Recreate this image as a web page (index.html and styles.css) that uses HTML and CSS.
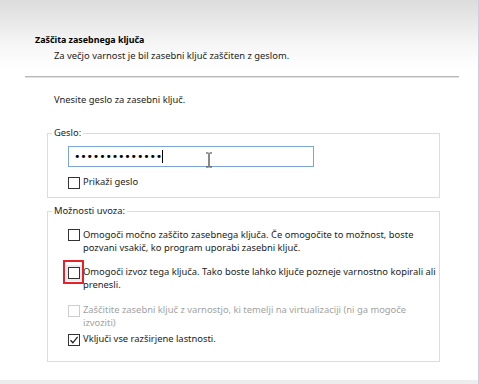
FILE: index.html
```html
<!DOCTYPE html>
<html lang="sl">
<head>
    <meta charset="UTF-8">
    <meta name="viewport" content="width=device-width, initial-scale=1.0">
    <title>Zaščita zasebnega ključa</title>
    <link rel="stylesheet" href="styles.css">
</head>
<body>
    <div class="window">
        <!-- Glava čarovnika -->
        <div class="header">
            <h1 class="title">Zaščita zasebnega ključa</h1>
            <p class="subtitle">Za večjo varnost je bil zasebni ključ zaščiten z geslom.</p>
        </div>
        <div class="separator"></div>

        <div class="content">
            <p class="intro">Vnesite geslo za zasebni ključ.</p>

            <!-- Geslo -->
            <fieldset class="group">
                <legend>Geslo:</legend>
                <div class="group-body group-password">
                    <div class="password-field">
                        <span class="dots">••••••••••••••</span><span class="caret"></span>
                        <svg class="ibeam" width="8" height="16" viewBox="0 0 8 16">
                            <path d="M1 1h2.5M4.5 1H7M4 1.5v13M1 15h2.5M4.5 15H7" stroke="#3a3a3a" stroke-width="1.2" fill="none"/>
                            <circle cx="4" cy="15.3" r="0.9" fill="#e0a060"/>
                        </svg>
                    </div>
                    <div class="check row-show">
                        <span class="box"></span>
                        <span class="check-text">Prikaži geslo</span>
                    </div>
                </div>
            </fieldset>

            <!-- Možnosti uvoza -->
            <fieldset class="group group-second">
                <legend>Možnosti uvoza:</legend>
                <div class="group-body group-options">
                    <div class="check row-1">
                        <span class="box"></span>
                        <span class="check-text">Omogoči močno zaščito zasebnega ključa. Če omogočite to možnost, boste pozvani vsakič, ko program uporabi zasebni ključ.</span>
                    </div>
                    <div class="check row-2">
                        <span class="box marked"></span>
                        <span class="check-text">Omogoči izvoz tega ključa. Tako boste lahko ključe pozneje varnostno kopirali ali prenesli.</span>
                    </div>
                    <div class="check row-3 disabled">
                        <span class="box"></span>
                        <span class="check-text">Zaščitite zasebni ključ z varnostjo, ki temelji na virtualizaciji (ni ga mogoče izvoziti)</span>
                    </div>
                    <div class="check row-4">
                        <span class="box checked">
                            <svg width="10" height="10" viewBox="0 0 10 10">
                                <path d="M1.5 5.2l2.4 2.6L8.6 1.8" stroke="#222" stroke-width="1.3" fill="none"/>
                            </svg>
                        </span>
                        <span class="check-text">Vključi vse razširjene lastnosti.</span>
                    </div>
                </div>
            </fieldset>
        </div>

        <div class="footer"></div>
    </div>
</body>
</html>
```

FILE: styles.css
```css
/* Barve in osnovne nastavitve */
:root {
    --text-color: #1c1c1c;
    --group-border: #dcdcdc;
    --input-border: #7aa7d8;
    --disabled-color: #a2a2a2;
}

body {
    margin: 0;
    padding: 0;
    background: #ffffff;
    font-family: "Noto Sans", "DejaVu Sans", sans-serif;
    font-size: 9.4px;
    color: var(--text-color);
}

.window {
    width: 478px;
    height: 384px;
    border-right: 1px solid #b4d9ef;
    display: flex;
    flex-direction: column;
    overflow: hidden;
}

/* Glava */
.header {
    height: 76px;
    background: linear-gradient(#dcdcdc, #f6f6f6 45px, #ffffff 70px);
    padding-top: 34px;
    box-sizing: border-box;
}

.title {
    margin: 0 0 0 35px;
    font-size: 8.9px;
    font-weight: bold;
    line-height: 12px;
    color: #000;
}

.subtitle {
    margin: 4px 0 0 54px;
    line-height: 12px;
}

.separator {
    height: 1px;
    margin: 0 19px 0 25px;
    background: #b8b8b8;
    border-bottom: 1px solid #e2e2e2;
}

/* Vsebina */
.content {
    flex: 1;
    padding-left: 47px;
}

.intro {
    margin: 16px 0 0 7px;
    line-height: 12px;
}

.group {
    width: 393px;
    box-sizing: border-box;
    margin: 21px 0 0 0;
    padding: 0;
    border: 1px solid var(--group-border);
    min-width: 0;
}

.group legend {
    margin-left: 4px;
    padding: 0 2px;
    line-height: 12px;
}

.group-second {
    margin-top: 7px;
}

.group-body {
    padding: 0 1px 0 20px;
}

.group-password {
    padding-top: 7px;
    padding-bottom: 8px;
}

.group-options {
    padding-top: 12px;
    padding-bottom: 15px;
}

/* Polje za geslo */
.password-field {
    position: relative;
    width: 246px;
    height: 21px;
    box-sizing: border-box;
    border: 1px solid var(--input-border);
    display: flex;
    align-items: center;
    padding-left: 5px;
}

.dots {
    font-family: "DejaVu Sans", sans-serif;
    font-size: 11px;
    letter-spacing: -0.2px;
    color: #000;
    line-height: 12px;
}

.caret {
    width: 1px;
    height: 13px;
    background: #000;
    margin-left: 0;
}

.ibeam {
    position: absolute;
    left: 136px;
    top: 5px;
}

/* Potrditvena polja */
.check {
    display: flex;
    align-items: flex-start;
    line-height: 12.5px;
}

.box {
    position: relative;
    flex: none;
    width: 12px;
    height: 12px;
    box-sizing: border-box;
    border: 1px solid #333;
    background: #fff;
    margin-top: 1px;
    margin-right: 3px;
    display: flex;
    align-items: center;
    justify-content: center;
}

.check-text {
    flex: 1;
}

.row-show {
    margin-top: 9px;
}

.row-1 .box {
    margin-top: 0;
}

.row-2 {
    margin-top: 12px;
}

.row-3 {
    margin-top: 13px;
}

.row-4 {
    margin-top: 4px;
}

/* Rdeča oznaka okoli polja */
.box.marked {
    box-shadow: 0 0 0 2px #ececec;
}

.box.marked::after {
    content: "";
    position: absolute;
    left: -6px;
    top: -8px;
    width: 21px;
    height: 24px;
    box-sizing: border-box;
    border: 2px solid #e8202a;
}

.disabled .box {
    border-color: #cdcdcd;
}

.disabled .check-text {
    color: var(--disabled-color);
}

.footer {
    height: 4px;
    background: #ededed;
    margin-right: -1px;
}
```
